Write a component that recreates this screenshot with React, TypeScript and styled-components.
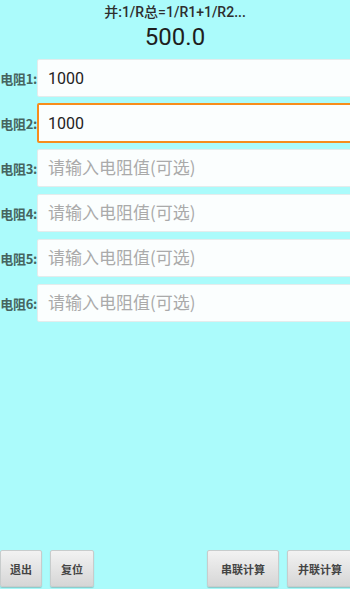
import styled, { createGlobalStyle } from 'styled-components'

const GlobalStyle = createGlobalStyle`
  html, body {
    margin: 0;
    padding: 0;
    background: #abfbfb;
    overflow: hidden;
  }
  body {
    font-family: Roboto, "Noto Sans CJK SC", sans-serif;
  }
`

const Screen = styled.div`
  width: 350px;
  height: 589px;
  display: flex;
  flex-direction: column;
  overflow: hidden;
  background: #abfbfb;
`

const Formula = styled.div`
  text-align: center;
  font-size: 14px;
  font-weight: 500;
  color: #2e2e2e;
  padding-top: 3px;
  height: 19px;
  line-height: 19px;
`

const Result = styled.div`
  text-align: center;
  font-size: 24px;
  color: #1e1e1e;
  height: 30px;
  line-height: 30px;
  margin-bottom: 7px;
`

const Fields = styled.div`
  display: flex;
  flex-direction: column;
  gap: 7px;
`

const Row = styled.div`
  display: flex;
  align-items: center;
  height: 38px;
`

const Label = styled.div`
  width: 37px;
  flex: none;
  display: flex;
  justify-content: flex-end;
  white-space: nowrap;
  font-family: "Noto Sans CJK SC", sans-serif;
  font-size: 13px;
  font-weight: bold;
  color: #46645f;
  letter-spacing: -0.3px;
`

const Input = styled.input<{ $focused?: boolean }>`
  flex: none;
  box-sizing: border-box;
  width: 330px;
  height: ${p => (p.$focused ? '40px' : '38px')};
  padding: 0 0 0 ${p => (p.$focused ? '9px' : '10px')};
  border: ${p => (p.$focused ? '2px solid #f78d1c' : '1px solid #e4ecec')};
  border-radius: 2px;
  background: #fbfefe;
  font-family: Roboto, "Noto Sans CJK SC", sans-serif;
  font-size: 16px;
  color: #222;
  outline: none;
  &::placeholder {
    color: #aaa;
    font-family: "Noto Sans CJK SC", sans-serif;
    font-size: 17px;
  }
`

const Spacer = styled.div`
  flex: 1;
`

const ButtonBar = styled.div`
  display: flex;
  align-items: center;
  height: 37px;
  margin-bottom: 2px;
`

const Button = styled.button<{ $w: number; $gap?: number }>`
  width: ${p => p.$w}px;
  height: 37px;
  margin-left: ${p => p.$gap ?? 0}px;
  flex: none;
  padding: 0;
  border: 1px solid #c8cccc;
  border-radius: 2px;
  background: linear-gradient(#f2f2f2, #d6d6d6);
  box-shadow: 0 1px 1px rgba(0, 0, 0, 0.2);
  font-family: "Noto Sans CJK SC", sans-serif;
  font-size: 11px;
  font-weight: bold;
  color: #444;
`

const fields = [
  { label: '电阻1:', value: '1000' },
  { label: '电阻2:', value: '1000', focused: true },
  { label: '电阻3:', value: '' },
  { label: '电阻4:', value: '' },
  { label: '电阻5:', value: '' },
  { label: '电阻6:', value: '' },
]

export default function App() {
  return (
    <>
      <GlobalStyle />
      <Screen>
        <Formula>并:1/R总=1/R1+1/R2...</Formula>
        <Result>500.0</Result>
        <Fields>
          {fields.map(f => (
            <Row key={f.label}>
              <Label>{f.label}</Label>
              <Input
                $focused={f.focused}
                defaultValue={f.value}
                placeholder="请输入电阻值(可选)"
              />
            </Row>
          ))}
        </Fields>
        <Spacer />
        <ButtonBar>
          <Button $w={42}>退出</Button>
          <Button $w={44} $gap={8}>复位</Button>
          <Button $w={72} $gap={113}>串联计算</Button>
          <Button $w={66} $gap={8}>并联计算</Button>
        </ButtonBar>
      </Screen>
    </>
  )
}
